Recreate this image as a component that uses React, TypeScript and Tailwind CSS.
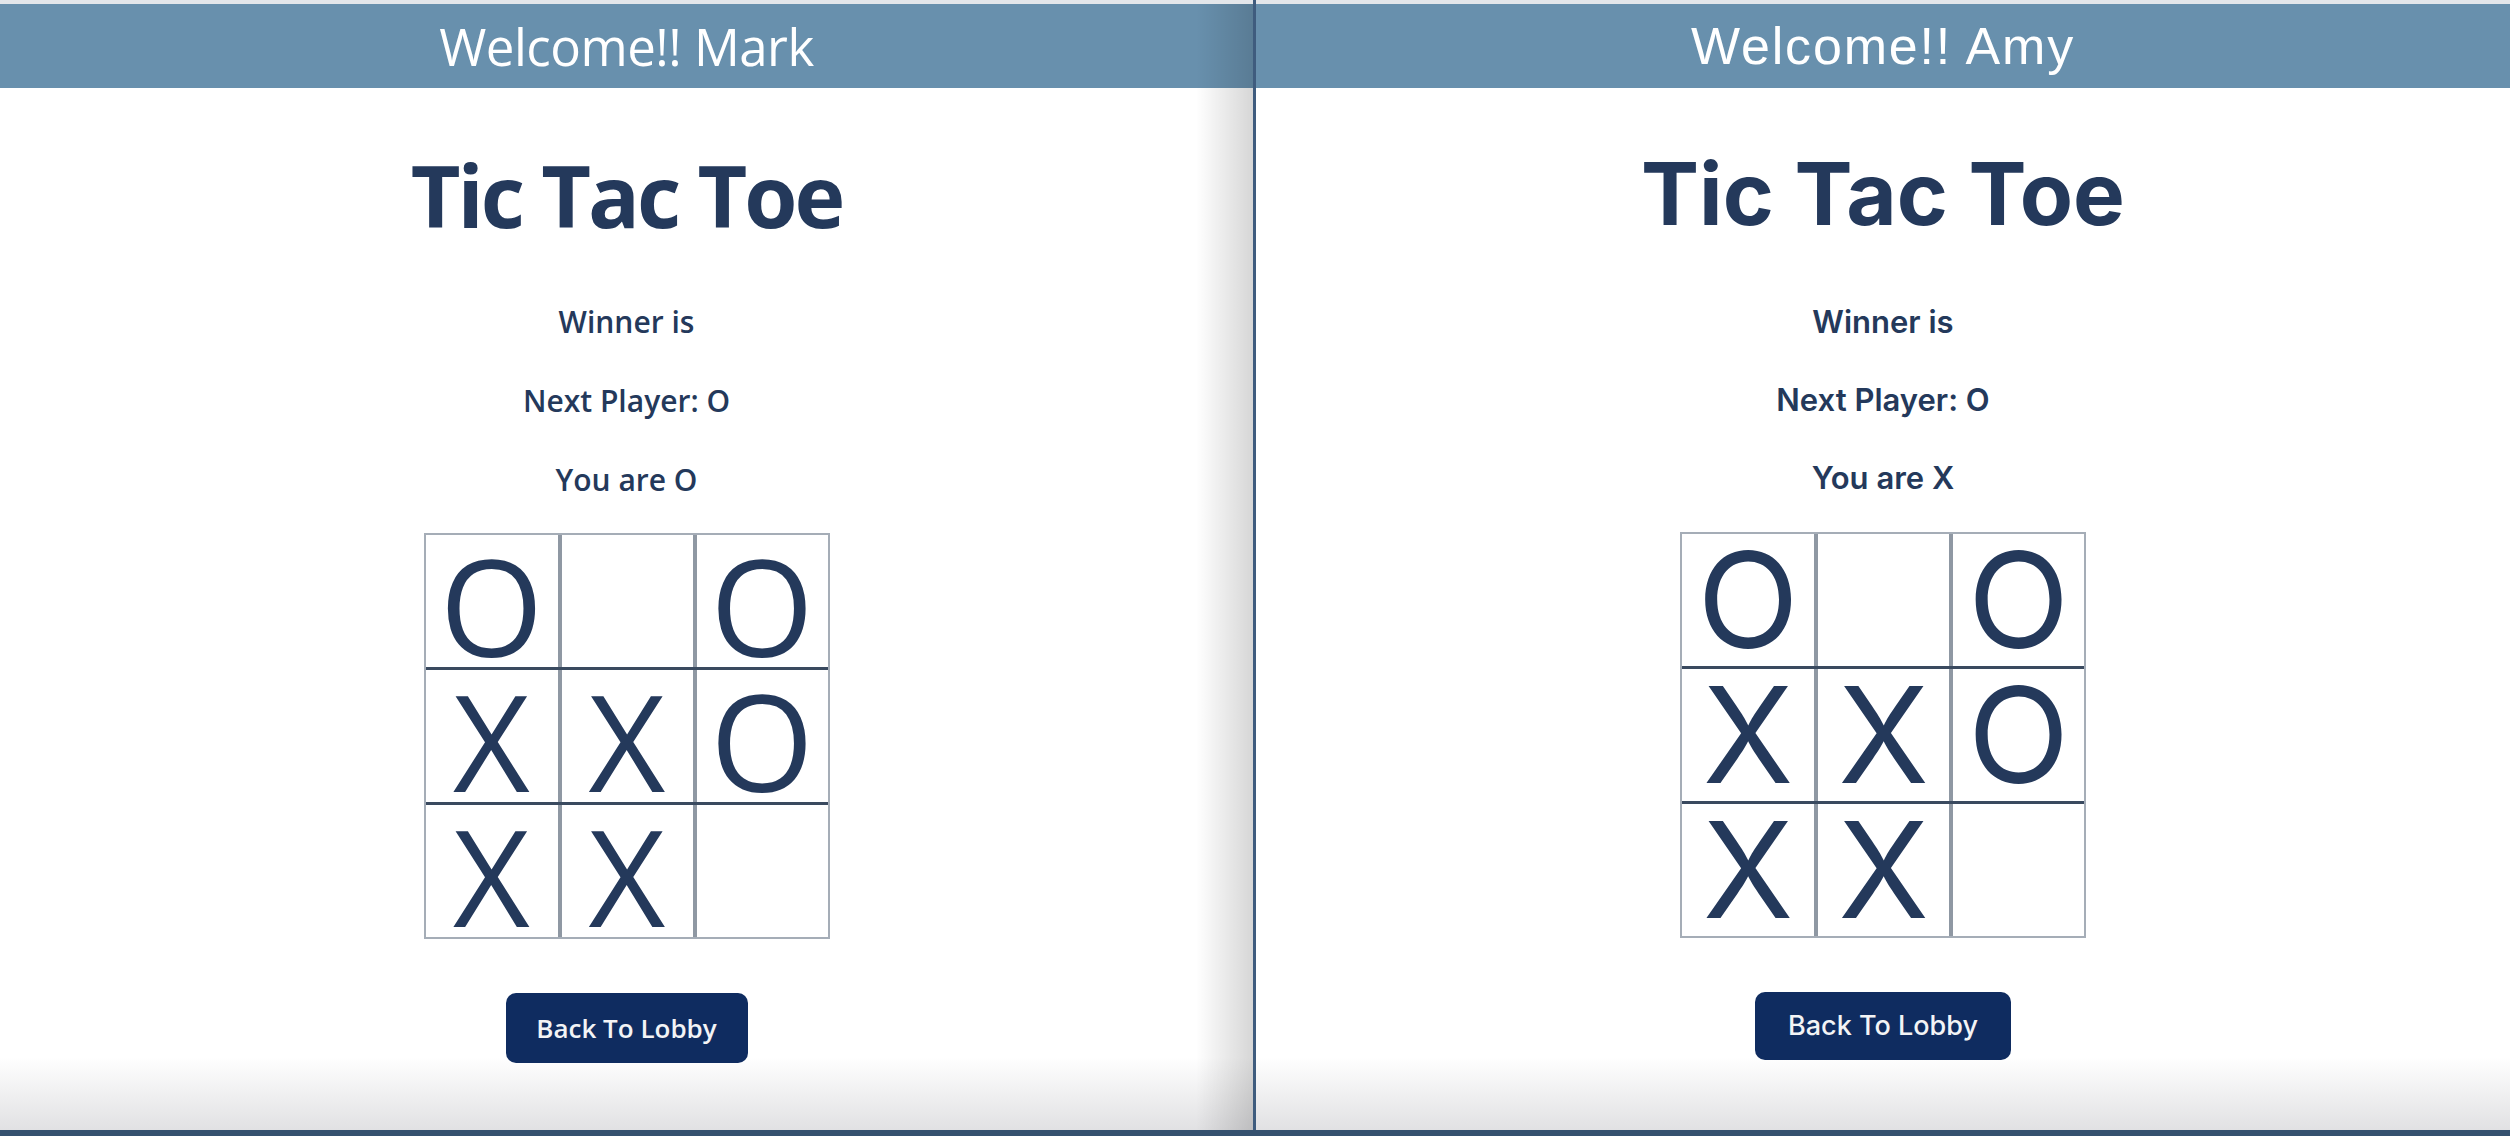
import React from "react";

type Mark = "X" | "O" | "";

const board: Mark[][] = [
  ["O", "", "O"],
  ["X", "X", "O"],
  ["X", "X", ""],
];

function Board({ markClass }: { markClass: string }) {
  return (
    <div className="flex flex-col border-2 border-[#a5adb7] bg-white">
      {board.map((row, r) => (
        <div
          key={r}
          className={
            r === 0 ? "flex" : "flex border-t-[3px] border-[#3a4a5f]"
          }
        >
          {row.map((cell, c) => (
            <div
              key={c}
              className={
                c === 0
                  ? "flex h-[132px] w-[132px] items-center justify-center"
                  : "flex h-[132px] w-[135px] items-center justify-center border-l-4 border-[#8f98a3]"
              }
            >
              <span className={markClass}>{cell}</span>
            </div>
          ))}
        </div>
      ))}
    </div>
  );
}

export default function App() {
  return (
    <div className="flex h-[1136px] w-[2510px] flex-col overflow-hidden bg-white">
      <div className="flex flex-1">
        {/* Left panel (Mark) */}
        <div className="flex w-[1253px] flex-col bg-[linear-gradient(to_right,rgba(0,0,0,0)_1196px,rgba(0,0,0,0.16)),linear-gradient(to_bottom,#ffffff_1057px,#e1e1e3_1130px)]">
          <div className="h-[4px] bg-[#e3e6ea]" />
          <div className="flex h-[84px] items-center justify-center bg-[#6890ad] bg-[linear-gradient(to_right,rgba(0,0,0,0)_1196px,rgba(0,0,0,0.14))]">
            <span className="font-['Open_Sans',sans-serif] text-[51px] font-normal leading-none tracking-[-0.01em] text-white">
              Welcome!! Mark
            </span>
          </div>
          <div className="flex flex-col items-center text-[#24395b]">
            <h1 className="mt-[64px] font-['Open_Sans',sans-serif] text-[86px] font-bold leading-none tracking-[-0.035em]">
              Tic Tac Toe
            </h1>
            <div className="mt-[69px] flex flex-col items-center gap-[49px] font-['Open_Sans',sans-serif] text-[30px] font-semibold leading-[30px]">
              <p>Winner is</p>
              <p>Next Player: O</p>
              <p>You are O</p>
            </div>
            <div className="mt-[38px]">
              <Board markClass="pt-[10px] font-['Open_Sans',sans-serif] text-[133px] font-normal leading-[100px] text-[#24395b]" />
            </div>
            <button className="mt-[54px] flex h-[70px] w-[242px] items-center justify-center rounded-[10px] bg-[#0f2c60] font-['Open_Sans',sans-serif] text-[26px] font-semibold text-[#f3f4f6]">
              Back To Lobby
            </button>
          </div>
        </div>

        {/* Divider */}
        <div className="w-[3px] bg-[#3f5c7e]" />

        {/* Right panel (Amy) */}
        <div className="flex flex-1 flex-col bg-[linear-gradient(to_bottom,#ffffff_1057px,#e1e1e3_1130px)]">
          <div className="h-[4px] bg-[#e3e6ea]" />
          <div className="flex h-[84px] items-center justify-center bg-[#6890ad]">
            <span className="font-['Liberation_Sans',Arial,sans-serif] text-[52px] font-normal leading-none tracking-[0.035em] text-white">
              Welcome!! Amy
            </span>
          </div>
          <div className="flex flex-col items-center text-[#24395b]">
            <h1 className="mt-[62px] font-['Inter',sans-serif] text-[87px] font-bold leading-none">
              Tic Tac Toe
            </h1>
            <div className="mt-[70px] flex flex-col items-center gap-[48px] font-['Inter',sans-serif] text-[31px] font-semibold leading-[30px]">
              <p>Winner is</p>
              <p>Next Player: O</p>
              <p>You are X</p>
            </div>
            <div className="mt-[39px]">
              <Board markClass="font-['Inter',sans-serif] text-[133px] font-normal leading-[100px] text-[#24395b]" />
            </div>
            <button className="mt-[54px] flex h-[68px] w-[256px] items-center justify-center rounded-[10px] bg-[#0f2c60] font-['Inter',sans-serif] text-[27px] font-medium text-[#f3f4f6]">
              Back To Lobby
            </button>
          </div>
        </div>
      </div>
      <div className="h-[6px] bg-[#35516f]" />
    </div>
  );
}
